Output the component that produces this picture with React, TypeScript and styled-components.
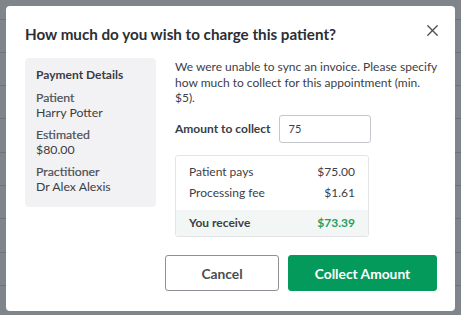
import React from "react";
import styled, { createGlobalStyle } from "styled-components";

const Global = createGlobalStyle`
  html, body { margin: 0; padding: 0; }
  body {
    font-family: Lato, "Noto Sans", sans-serif;
    color: #3d4047;
    -webkit-font-smoothing: antialiased;
  }
  * { box-sizing: border-box; }
`;

const Backdrop = styled.div`
  width: 461px;
  height: 315px;
  padding: 6px;
  background-color: #80848b;
  background-image: repeating-linear-gradient(
    to bottom,
    transparent 0px,
    transparent 18.6px,
    #6f737a 18.6px,
    #6f737a 19.6px,
    transparent 19.6px,
    transparent 33.3px
  );
  overflow: hidden;
`;

const Modal = styled.div`
  width: 449px;
  height: 305px;
  background: #fff;
  border-radius: 4px;
  padding: 18px 17px 20px 19px;
  display: flex;
  flex-direction: column;
`;

const Header = styled.div`
  display: flex;
  justify-content: space-between;
  align-items: flex-start;
  height: 20px;
  margin-bottom: 14px;
`;

const Title = styled.h2`
  margin: 0;
  font-size: 15.2px;
  line-height: 20px;
  font-weight: 700;
  color: #2b2e34;
`;

const Close = styled.button`
  border: 0;
  background: none;
  padding: 0;
  margin: 1px 0 0;
  width: 11px;
  height: 11px;
  display: flex;
  color: #4a4d53;
  cursor: pointer;
`;

const Body = styled.div`
  display: grid;
  grid-template-columns: 131px 1fr;
  column-gap: 19px;
  align-items: start;
`;

const Details = styled.div`
  background: #f2f2f4;
  border-radius: 4px;
  padding: 9px 11px 13px;
  display: flex;
  flex-direction: column;
  gap: 7px;
`;

const DetailsTitle = styled.div`
  font-size: 12px;
  line-height: 16px;
  font-weight: 700;
  color: #3a3d44;
`;

const Group = styled.div`
  display: flex;
  flex-direction: column;
  font-size: 12.3px;
  line-height: 15px;
`;

const Label = styled.span`
  font-weight: 400;
  color: #4c4f56;
  -webkit-text-stroke: 0.2px #4c4f56;
`;

const Value = styled.span`
  color: #3a3d44;
`;

const Main = styled.div`
  display: flex;
  flex-direction: column;
  padding-top: 1px;
`;

const Intro = styled.p`
  margin: 0;
  font-size: 12px;
  line-height: 15.5px;
  color: #3d4047;
`;

const AmountRow = styled.label`
  display: flex;
  align-items: center;
  gap: 8px;
  margin-top: 9px;
`;

const AmountLabel = styled.span`
  font-size: 12px;
  font-weight: 700;
  color: #3a3d44;
`;

const AmountInput = styled.input`
  width: 92px;
  height: 28px;
  border: 1px solid #c4c7cc;
  border-radius: 3px;
  padding: 0 9px;
  font-family: Lato, "Noto Sans", sans-serif;
  font-size: 11px;
  color: #3d4047;
  outline: none;
`;

const Summary = styled.div`
  margin-top: 12px;
  width: 194px;
  border: 1px solid #e2e4e7;
  border-radius: 3px;
  overflow: hidden;
`;

const Rows = styled.div`
  padding: 8px 13px 9px;
  display: flex;
  flex-direction: column;
  gap: 5px;
`;

const Row = styled.div<{ $strong?: boolean }>`
  display: flex;
  justify-content: space-between;
  font-size: 12px;
  line-height: 16px;
  font-weight: ${(p) => (p.$strong ? 700 : 400)};
  color: #3d4047;
`;

const Total = styled(Row)`
  background: #f2f7f5;
  padding: 5px 13px;
`;

const Green = styled.span`
  color: #1d9e63;
`;

const Footer = styled.div`
  margin-top: auto;
  display: flex;
  justify-content: flex-end;
  gap: 9px;
  padding-right: 1px;
`;

const Button = styled.button<{ $primary?: boolean }>`
  height: 36px;
  width: ${(p) => (p.$primary ? "149px" : "114px")};
  border-radius: 3px;
  font-family: Lato, "Noto Sans", sans-serif;
  font-size: 13.8px;
  font-weight: 700;
  cursor: pointer;
  border: 1px solid ${(p) => (p.$primary ? "#049a5b" : "#8e9196")};
  background: ${(p) => (p.$primary ? "#049a5b" : "#fff")};
  color: ${(p) => (p.$primary ? "#fff" : "#4a4d54")};
`;

export default function App() {
  return (
    <>
      <Global />
      <Backdrop>
        <Modal>
          <Header>
            <Title>How much do you wish to charge this patient?</Title>
            <Close aria-label="Close">
              <svg width="11" height="11" viewBox="0 0 11 11" fill="none">
                <path d="M0.8 0.8L10.2 10.2M10.2 0.8L0.8 10.2" stroke="currentColor" strokeWidth="1.3" strokeLinecap="round" />
              </svg>
            </Close>
          </Header>
          <Body>
            <Details>
              <DetailsTitle>Payment Details</DetailsTitle>
              <Group>
                <Label>Patient</Label>
                <Value>Harry Potter</Value>
              </Group>
              <Group>
                <Label>Estimated</Label>
                <Value>$80.00</Value>
              </Group>
              <Group>
                <Label>Practitioner</Label>
                <Value>Dr Alex Alexis</Value>
              </Group>
            </Details>
            <Main>
              <Intro>
                We were unable to sync an invoice. Please specify how much to collect for this appointment (min. $5).
              </Intro>
              <AmountRow>
                <AmountLabel>Amount to collect</AmountLabel>
                <AmountInput defaultValue="75" />
              </AmountRow>
              <Summary>
                <Rows>
                  <Row>
                    <span>Patient pays</span>
                    <span>$75.00</span>
                  </Row>
                  <Row>
                    <span>Processing fee</span>
                    <span>$1.61</span>
                  </Row>
                </Rows>
                <Total $strong>
                  <span>You receive</span>
                  <Green>$73.39</Green>
                </Total>
              </Summary>
            </Main>
          </Body>
          <Footer>
            <Button>Cancel</Button>
            <Button $primary>Collect Amount</Button>
          </Footer>
        </Modal>
      </Backdrop>
    </>
  );
}
